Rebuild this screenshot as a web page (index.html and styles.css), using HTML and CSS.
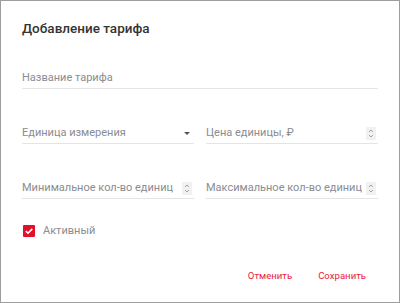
FILE: index.html
```html
<!DOCTYPE html>
<html lang="ru">
<head>
  <meta charset="UTF-8">
  <meta name="viewport" content="width=device-width, initial-scale=1.0">
  <title>Добавление тарифа</title>
  <link rel="stylesheet" href="styles.css">
</head>
<body>

<div class="dialog">
  <h1 class="title">Добавление тарифа</h1>

  <div class="field first">
    <span class="placeholder">Название тарифа</span>
  </div>

  <div class="row">
    <div class="field">
      <span class="placeholder">Единица измерения</span>
      <span class="arrow"></span>
    </div>
    <div class="field">
      <span class="placeholder">Цена единицы, ₽</span>
      <span class="spinner">
        <svg width="10" height="13" viewBox="0 0 10 13">
          <path d="M3 5 L5 3 L7 5 M3 8 L5 10 L7 8" fill="none" stroke="#9a9a9a" stroke-width="0.9"/>
        </svg>
      </span>
    </div>
  </div>

  <div class="row">
    <div class="field">
      <span class="placeholder">Минимальное кол-во единиц</span>
      <span class="spinner">
        <svg width="10" height="13" viewBox="0 0 10 13">
          <path d="M3 5 L5 3 L7 5 M3 8 L5 10 L7 8" fill="none" stroke="#9a9a9a" stroke-width="0.9"/>
        </svg>
      </span>
    </div>
    <div class="field">
      <span class="placeholder">Максимальное кол-во единиц</span>
      <span class="spinner">
        <svg width="10" height="13" viewBox="0 0 10 13">
          <path d="M3 5 L5 3 L7 5 M3 8 L5 10 L7 8" fill="none" stroke="#9a9a9a" stroke-width="0.9"/>
        </svg>
      </span>
    </div>
  </div>

  <label class="check">
    <span class="box">
      <svg width="12" height="12" viewBox="0 0 12 12">
        <path d="M2.8 6.2 L5 8.2 L9.3 3.9" fill="none" stroke="#fff" stroke-width="1.6"/>
      </svg>
    </span>
    Активный
  </label>

  <div class="actions">
    <button class="btn" type="button">Отменить</button>
    <button class="btn" type="button">Сохранить</button>
  </div>
</div>

</body>
</html>
```

FILE: styles.css
```css
body {
  margin: 0;
  background: #fff;
  font-family: Roboto, "Noto Sans", sans-serif;
}

.dialog {
  width: 400px;
  height: 303px;
  box-sizing: border-box;
  border: 1px solid #9e9e9e;
  padding: 19px 21px 0 21px;
  background: #fff;
}

.title {
  margin: 0;
  font-size: 13.5px;
  line-height: 16px;
  font-weight: 500;
  color: #333;
}

.field {
  display: flex;
  align-items: center;
  justify-content: space-between;
  margin-top: 36px;
  padding-bottom: 2px;
  border-bottom: 1px solid #e4e4e4;
  font-size: 11px;
  line-height: 16px;
}

.field.first {
  margin-top: 34px;
}

.row {
  display: grid;
  grid-template-columns: minmax(0, 1fr) minmax(0, 1fr);
  gap: 12px;
}

.placeholder {
  color: #8a8c91;
  white-space: nowrap;
  overflow: hidden;
}

.arrow {
  flex: none;
  width: 0;
  height: 0;
  margin-right: 4px;
  border-left: 3px solid transparent;
  border-right: 3px solid transparent;
  border-top: 3px solid #555;
}

.spinner {
  flex: none;
  display: flex;
  width: 10px;
  height: 13px;
  margin-right: 2px;
  background: #f1f1f1;
}

.check {
  display: flex;
  align-items: center;
  gap: 8px;
  margin-top: 24px;
  padding-left: 1px;
  font-size: 11px;
  line-height: 16px;
  color: #8a8c91;
}

.box {
  display: flex;
  width: 12px;
  height: 12px;
  border-radius: 1px;
  background: #e3102b;
}

.actions {
  display: flex;
  justify-content: flex-end;
  gap: 2px;
  margin-top: 21px;
}

.btn {
  padding: 8px 12px;
  border: none;
  background: none;
  font-family: Roboto, "Noto Sans", sans-serif;
  font-size: 9.6px;
  line-height: 16px;
  color: #e8203a;
  cursor: pointer;
}
```
